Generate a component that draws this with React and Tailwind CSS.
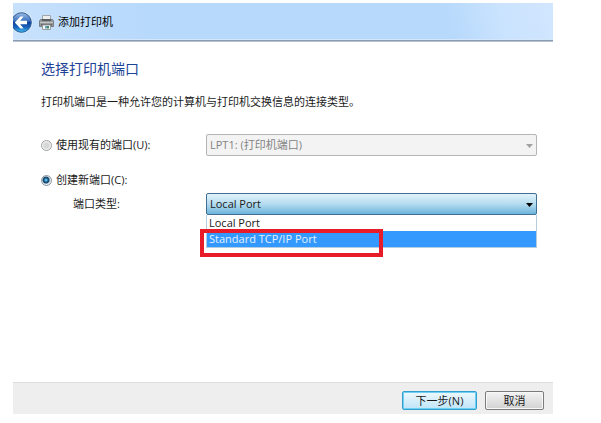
import React, { useState } from 'react';

const PORT_TYPES = ['Local Port', 'Standard TCP/IP Port'];

function BackIcon() {
  return (
    <svg width="20" height="24" viewBox="0 0 20 24" aria-hidden="true">
      <defs>
        <linearGradient id="orb" x1="0" y1="0" x2="0" y2="1">
          <stop offset="0" stopColor="#9dbde4" />
          <stop offset="0.42" stopColor="#3d72bd" />
          <stop offset="0.5" stopColor="#11459c" />
          <stop offset="0.75" stopColor="#1a66bd" />
          <stop offset="1" stopColor="#43c6f5" />
        </linearGradient>
      </defs>
      <circle cx="8.5" cy="12.5" r="11" fill="#dcebfb" />
      <circle cx="8.5" cy="12.5" r="9.8" fill="url(#orb)" stroke="#2b5794" strokeWidth="1" />
      <path d="M1.8 12.5 L7.4 6.6 H10.6 L7.2 10.8 H14 V14.2 H7.2 L10.6 18.4 H7.4 Z" fill="#fff" />
    </svg>
  );
}

function PrinterIcon() {
  return (
    <svg width="15" height="15" viewBox="0 0 15 15" aria-hidden="true">
      <path d="M3.5 0.5 H11.5 V5 H3.5 Z" fill="#eceeef" stroke="#a3a6a9" />
      <path d="M1.5 4.5 H13.5 L14.5 6 V11.5 H0.5 V6 Z" fill="#96999b" stroke="#7b7e80" />
      <path d="M3 4 H12 V6 H3 Z" fill="#5b5e60" />
      <path d="M1 7.5 H14" stroke="#c2c4c6" />
      <path d="M2 9 H13 V10.5 H2 Z" fill="#5f6264" />
      <path d="M3.5 10 H11.5 V14.5 H3.5 Z" fill="#f8f9f9" stroke="#999c9e" />
      <path d="M6 11 H8 V13.5 H6 Z" fill="#5fa3b8" />
      <path d="M8 11 H10 V13.5 H8 Z" fill="#4d8a6a" />
    </svg>
  );
}

function Arrow({ className }) {
  return (
    <svg width="7" height="4" viewBox="0 0 7 4" className={`absolute right-1 top-[10px] pointer-events-none ${className}`} aria-hidden="true">
      <path d="M0 0 H7 L3.5 4 Z" fill="currentColor" />
    </svg>
  );
}

function PortRadio({ id, checked, onChange, children }) {
  return (
    <div className="flex items-center gap-1">
      <input
        id={id}
        type="radio"
        name="port"
        checked={checked}
        onChange={onChange}
        className="appearance-none w-[11px] h-[11px] rounded-full border border-[#a0a1a1] bg-[radial-gradient(circle,#d4d6d8_35%,#f4f4f4_70%)] checked:border-[#8795a1] checked:bg-[radial-gradient(circle_at_45%_45%,#5cc4ec_8%,#1a5485_30%,#1a4468_42%,#e4ecf2_58%)]"
      />
      <label htmlFor={id}>{children}</label>
    </div>
  );
}

export default function App() {
  const [mode, setMode] = useState('new');
  const [portType, setPortType] = useState('Local Port');

  return (
    <div className="bg-white pt-[3px] pb-2 pl-[13px] pr-12 text-[11px] leading-5 text-[#1a1a1a] font-['Open_Sans','Noto_Sans_CJK_SC',sans-serif]">
      <header className="flex items-center h-[39px] border-b border-[#b4c3d6] bg-[linear-gradient(75deg,#c9e2fd_0%,#b7d9fc_25%,#b7d9fc_80%,#cae3fe_90%,#d2e6ff_100%)] shadow-[inset_0_-1px_0_#8b9bb0,inset_0_-2px_0_#d3e6fa]">
        <button type="button" aria-label="返回">
          <BackIcon />
        </button>
        <div className="flex items-center gap-1 ml-[6px] text-black">
          <PrinterIcon />
          <h1>添加打印机</h1>
        </div>
      </header>

      <main className="pl-7 pr-4 pt-[15px] pb-[167px]">
        <h2 className="text-sm leading-6 text-[#1c4496]">选择打印机端口</h2>
        <p className="mt-[11px]">打印机端口是一种允许您的计算机与打印机交换信息的连接类型。</p>

        <div className="grid grid-cols-[165px_1fr] items-center mt-[22px]">
          <PortRadio id="existing" checked={mode === 'existing'} onChange={() => setMode('existing')}>
            使用现有的端口(U):
          </PortRadio>
          <div className="relative">
            <select
              aria-label="现有的端口"
              disabled
              className="block appearance-none w-full h-[22px] pl-[3px] rounded-xs border border-[#b3b6b9] bg-[#f3f3f3] text-[#838383] opacity-100"
            >
              <option>LPT1: (打印机端口)</option>
            </select>
            <Arrow className="text-[#a2a2a2]" />
          </div>
        </div>

        <div className="mt-[14px]">
          <PortRadio id="new" checked={mode === 'new'} onChange={() => setMode('new')}>
            创建新端口(C):
          </PortRadio>
        </div>

        <div className="grid grid-cols-[165px_1fr] items-center mt-[3px]">
          <label htmlFor="port-type" className="pl-8">端口类型:</label>
          <div className="relative">
            <select
              id="port-type"
              value={portType}
              onChange={(e) => setPortType(e.target.value)}
              className="block appearance-none w-full h-[22px] pl-[3px] rounded-xs border border-[#3f6f92] bg-linear-to-b from-[#e2f2fa] via-[#b4dcef] to-[#6cb3dc]"
            >
              {PORT_TYPES.map((type) => (
                <option key={type}>{type}</option>
              ))}
            </select>
            <Arrow className="text-black" />

            {/* open list */}
            <ul role="listbox" aria-label="端口类型" className="absolute inset-x-0 top-full border border-t-0 border-[#b5cde0] bg-white leading-4">
              {PORT_TYPES.map((type) => (
                <li
                  key={type}
                  role="option"
                  aria-selected={type !== portType}
                  onClick={() => setPortType(type)}
                  className="h-4 pl-[2px] aria-selected:bg-[#3399ff] aria-selected:text-[#e4f1ff]"
                >
                  {type}
                </li>
              ))}
            </ul>
            <div className="absolute -left-[6px] top-9 w-[183px] h-7 border-4 border-[#e81c28] pointer-events-none" />
          </div>
        </div>
      </main>

      <footer className="flex justify-end gap-2 pt-2 pb-1 pr-[9px] border-t border-[#dcdcdc] bg-[#eeeeee]">
        <button
          type="button"
          className="w-[75px] h-[19px] rounded-xs border border-[#2f9fd0] bg-linear-to-b from-[#eef8fd] to-[#bfe5f8] leading-4 shadow-[inset_0_0_0_1px_#6fd0f3]"
        >
          下一步(N)
        </button>
        <button
          type="button"
          className="w-[59px] h-[19px] rounded-xs border border-[#7b7b7b] bg-linear-to-b from-[#f3f3f3] to-[#d2d2d2] leading-4 shadow-[inset_0_0_0_1px_#f8f8f8]"
        >
          取消
        </button>
      </footer>
    </div>
  );
}
